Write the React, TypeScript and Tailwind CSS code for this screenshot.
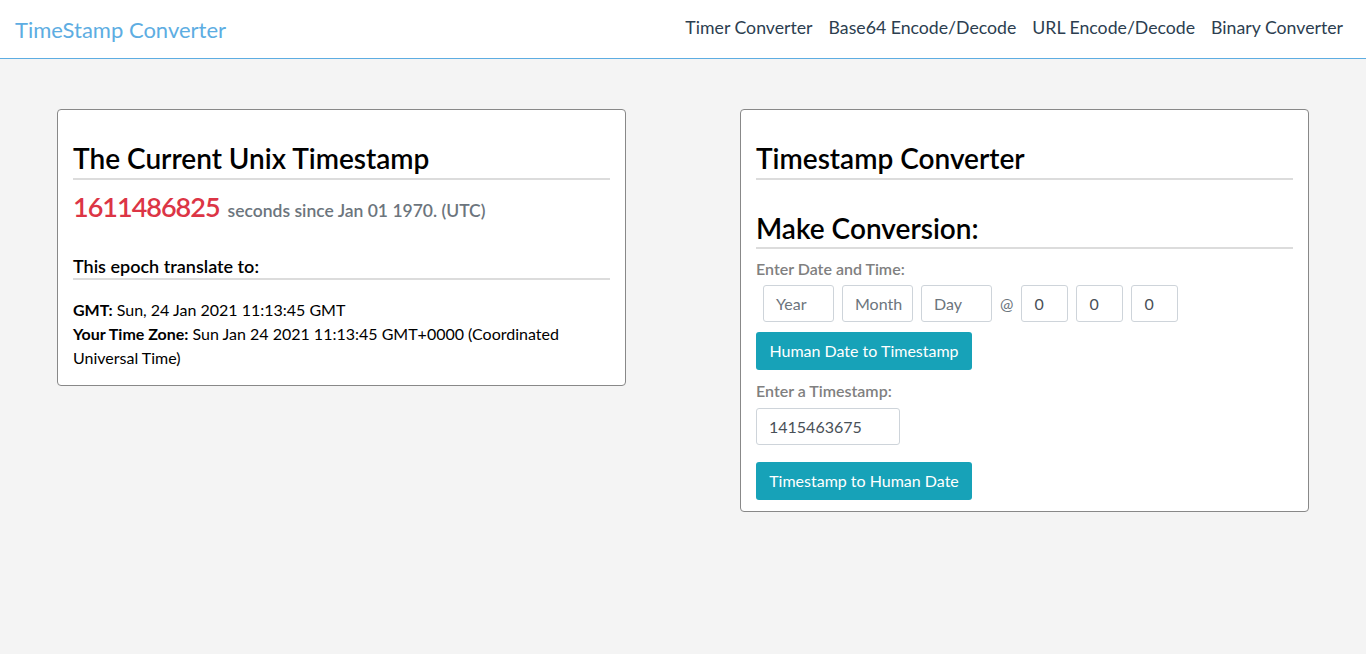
const navLinks = ['Timer Converter', 'Base64 Encode/Decode', 'URL Encode/Decode', 'Binary Converter'];

const Heading = ({ children, className }: { children: React.ReactNode; className: string }) => (
  <h2 className={`border-b-2 border-[#dcdcdc] font-semibold text-black ${className}`}>{children}</h2>
);

const SmallInput = ({ placeholder, value, width }: { placeholder?: string; value?: string; width: string }) => (
  <div
    className={`flex h-[37px] items-center rounded-[3px] border border-[#ced4da] bg-white px-3 text-[16px] ${width} ${
      value ? 'text-[#495057]' : 'text-[#6c757d]'
    }`}
  >
    {value ?? placeholder}
  </div>
);

const ActionButton = ({ children }: { children: React.ReactNode }) => (
  <button className="h-[38px] w-[216px] rounded-[3px] bg-[#17a2b8] text-[16px] text-white">{children}</button>
);

export default function App() {
  return (
    <div className="min-h-screen bg-[#f4f4f4] font-['Lato',sans-serif] text-[#212529]">
      <nav className="flex h-[59px] items-center justify-between border-b border-[#5dade2] bg-white pr-[23px] pl-[15px]">
        <span className="text-[22px] text-[#5dade2]">TimeStamp Converter</span>
        <ul className="flex gap-4 pb-[2px] text-[17.7px] text-[#2c3e50]">
          {navLinks.map((l) => (
            <li key={l}>{l}</li>
          ))}
        </ul>
      </nav>

      <main className="grid grid-cols-2 items-start pt-[50px]">
        <div className="px-[57px]">
          <div className="rounded-[4px] border border-[#888] bg-white px-[15px] pt-[30px] pb-[15px]">
            <Heading className="pb-[2px] text-[28px] leading-[36px]">The Current Unix Timestamp</Heading>
            <div className="mt-[7px] flex items-baseline gap-2">
              <span className="text-[27px] font-semibold tracking-[-1px] text-[#dc3545]">1611486825</span>
              <span className="text-[17.5px] font-semibold text-[#6c757d]">seconds since Jan 01 1970. (UTC)</span>
            </div>
            <h3 className="mt-[27px] border-b-2 border-[#dcdcdc] pb-[1px] text-[18px] leading-[22px] font-semibold text-black">
              This epoch translate to:
            </h3>
            <div className="mt-[18px] text-[16px] leading-[24px] text-black">
              <p>
                <b>GMT:</b> Sun, 24 Jan 2021 11:13:45 GMT
              </p>
              <p>
                <b>Your Time Zone:</b> Sun Jan 24 2021 11:13:45 GMT+0000 (Coordinated Universal Time)
              </p>
            </div>
          </div>
        </div>

        <div className="px-[57px]">
          <div className="rounded-[4px] border border-[#888] bg-white px-[15px] pt-[30px] pb-[11px]">
            <Heading className="pb-[2px] text-[28px] leading-[36px]">Timestamp Converter</Heading>
            <Heading className="mt-[30px] pb-[1px] text-[28px] leading-[36px]">Make Conversion:</Heading>
            <p className="mt-[8px] text-[16px] font-semibold text-[#808080]">Enter Date and Time:</p>
            <div className="mt-[4px] flex items-center gap-2 pl-[7px]">
              <SmallInput placeholder="Year" width="w-[71px]" />
              <SmallInput placeholder="Month" width="w-[71px]" />
              <SmallInput placeholder="Day" width="w-[71px]" />
              <span className="text-[16px] text-[#6c757d]">@</span>
              <SmallInput value="0" width="w-[47px]" />
              <SmallInput value="0" width="w-[47px]" />
              <SmallInput value="0" width="w-[47px]" />
            </div>
            <div className="mt-[10px]">
              <ActionButton>Human Date to Timestamp</ActionButton>
            </div>
            <p className="mt-[9px] text-[16px] font-semibold text-[#808080]">Enter a Timestamp:</p>
            <div className="mt-[5px]">
              <SmallInput value="1415463675" width="w-[144px]" />
            </div>
            <div className="mt-[17px]">
              <ActionButton>Timestamp to Human Date</ActionButton>
            </div>
          </div>
        </div>
      </main>
    </div>
  );
}
